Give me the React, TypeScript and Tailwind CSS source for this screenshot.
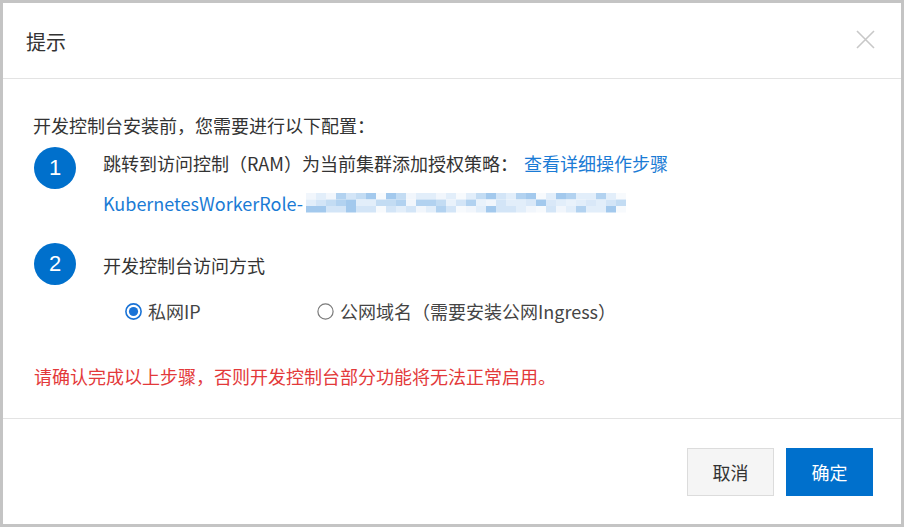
import React from "react";

function Blur() {
  const cols = 32;
  const rows = 3;
  const palette = ["#f1f6fc", "#e2eefa", "#d3e5f7", "#c3dcf3", "#b2d2f0", "#a3c9ed", "#e9f2fb", "#d9e8f8"];
  const rects: React.ReactNode[] = [];
  for (let r = 0; r < rows; r++) {
    for (let c = 0; c < cols; c++) {
      const h = Math.abs(Math.sin(c * 12.9898 + r * 78.233) * 43758.5453);
      let idx = Math.floor((h - Math.floor(h)) * palette.length);
      if (r === 2 && idx > 2) idx = idx - 2;
      if (r === 0 && idx > 5) idx = 1;
      const gap = c % 8 === 7 && r !== 1;
      rects.push(
        <rect key={`${r}-${c}`} x={c * 10} y={r * 6.5} width={10} height={6.5} fill={gap ? "#f7fafd" : palette[idx]} />
      );
    }
  }
  return (
    <svg width="322" height="20" viewBox="0 0 320 20" className="ml-[2px]">
      {rects}
    </svg>
  );
}

function Step({ n }: { n: string }) {
  return (
    <div className="w-[42px] h-[42px] shrink-0 rounded-full bg-[#0070cc] text-white flex items-center justify-center text-[22px] leading-none font-['Liberation_Sans',sans-serif]">
      {n}
    </div>
  );
}

export default function App() {
  return (
    <div className="w-[904px] h-[527px] border-[3px] border-[#c4c4c4] bg-white flex flex-col text-[#333333] font-['Noto_Sans_CJK_SC','Noto_Sans',sans-serif]">
      <div className="h-[76px] shrink-0 flex items-center justify-between pl-[23px] pr-[26px] border-b border-[#e3e3e3]">
        <div className="text-[20px] leading-[28px] mt-[3px] text-[#333]">提示</div>
        <svg width="19" height="19" viewBox="0 0 19 19" className="-mt-[2px]">
          <path d="M1 1 L18 18 M18 1 L1 18" stroke="#c8c8c8" strokeWidth="1.6" fill="none" />
        </svg>
      </div>

      <div className="h-[340px] shrink-0 border-b border-[#e3e3e3] pl-[31px] pt-[34px] text-[18px]">
        <div className="leading-[24px] -ml-[1px]">开发控制台安装前，您需要进行以下配置：</div>

        <div className="mt-[10px] flex">
          <Step n="1" />
          <div className="ml-[27px] mt-[4px] flex flex-col">
            <div className="leading-[24px] flex">
              <span>跳转到访问控制（RAM）为当前集群添加授权策略：</span>
              <span className="text-[#1a7bd5] ml-[6px]">查看详细操作步骤</span>
            </div>
            <div className="mt-[16px] leading-[24px] flex items-center text-[#1a7bd5]">
              <span>KubernetesWorkerRole-</span>
              <Blur />
            </div>
          </div>
        </div>

        <div className="mt-[28px] flex">
          <Step n="2" />
          <div className="ml-[27px] mt-[10px] leading-[24px]">开发控制台访问方式</div>
        </div>

        <div className="mt-[14px] flex items-center leading-[24px] pl-[91px] text-[#444]">
          <div className="w-[192px] flex items-center">
            <svg width="17" height="17" viewBox="0 0 17 17">
              <circle cx="8.5" cy="8.5" r="7.6" fill="white" stroke="#1a73d6" strokeWidth="1.6" />
              <circle cx="8.5" cy="8.5" r="4.6" fill="#1a73d6" />
            </svg>
            <span className="ml-[6px]">私网IP</span>
          </div>
          <div className="flex items-center">
            <svg width="17" height="17" viewBox="0 0 17 17">
              <circle cx="8.5" cy="8.5" r="7.6" fill="white" stroke="#7a7a7a" strokeWidth="1.2" />
            </svg>
            <span className="ml-[6px]">公网域名（需要安装公网Ingress）</span>
          </div>
        </div>

        <div className="mt-[41px] leading-[24px] text-[#e3393a]">请确认完成以上步骤，否则开发控制台部分功能将无法正常启用。</div>
      </div>

      <div className="flex-1 flex justify-end items-start pt-[29px] pr-[28px] gap-[12px] text-[18px]">
        <button className="w-[87px] h-[48px] border border-[#dcdcdc] bg-[#f5f5f5] text-[#333] flex items-center justify-center">
          取消
        </button>
        <button className="w-[87px] h-[48px] bg-[#0070cc] text-white flex items-center justify-center">
          确定
        </button>
      </div>
    </div>
  );
}
